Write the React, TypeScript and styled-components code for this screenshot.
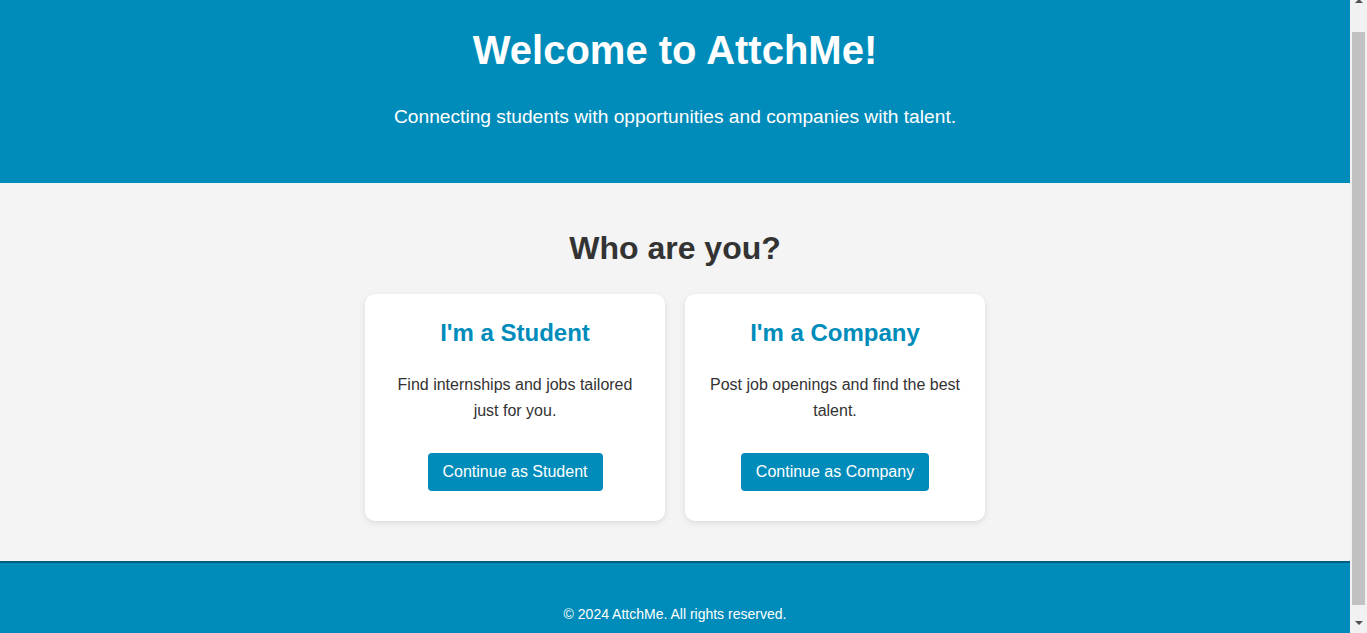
import React from "react";
import styled, { createGlobalStyle } from "styled-components";

const GlobalStyle = createGlobalStyle`
  html, body {
    margin: 0;
    padding: 0;
  }
  body {
    font-family: "Liberation Sans", Arial, sans-serif;
    line-height: 1.6;
    background: #f4f4f4;
    color: #333;
  }
`;

const Page = styled.div`
  margin-right: 17px;
`;

const ScrollTrack = styled.div`
  position: fixed;
  top: 0;
  right: 0;
  bottom: 0;
  width: 17px;
  background: #f1f1f1;
  display: flex;
  flex-direction: column;
  align-items: center;
`;

const Arrow = styled.div<{ $dir: "up" | "down" }>`
  width: 0;
  height: 0;
  border-left: 4px solid transparent;
  border-right: 4px solid transparent;
  ${(p) =>
    p.$dir === "up"
      ? "border-bottom: 4px solid #505050; margin-top: -1px;"
      : "border-top: 4px solid #505050; margin-top: 16px;"}
`;

const Thumb = styled.div`
  width: 13px;
  height: 573px;
  margin-top: 29px;
  background: #c1c1c1;
`;

const Header = styled.header`
  background: #008cba;
  color: #fff;
  text-align: center;
  padding: 18px 20px 50px;
`;

const Title = styled.h1`
  margin: 0;
  font-size: 40px;
  font-weight: bold;
  line-height: 64px;
`;

const Tagline = styled.p`
  margin: 20px 0 0;
  font-size: 19.2px;
`;

const Main = styled.main`
  padding: 40px 20px;
  text-align: center;
`;

const Question = styled.h2`
  margin: 0 0 20px;
  font-size: 32px;
  font-weight: bold;
  color: #333;
`;

const CardRow = styled.div`
  display: flex;
  justify-content: center;
  gap: 20px;
`;

const Card = styled.div`
  width: 300px;
  box-sizing: border-box;
  background: #fff;
  border-radius: 10px;
  padding: 20px 20px 30px;
  box-shadow: 0 2px 6px rgba(0, 0, 0, 0.1);
  display: flex;
  flex-direction: column;
  align-items: center;
`;

const CardTitle = styled.h3`
  margin: 0;
  font-size: 24px;
  font-weight: bold;
  color: #008cba;
`;

const CardText = styled.p`
  margin: 20px 0 30px;
  font-size: 16px;
  color: #333;
`;

const Button = styled.button`
  font-family: "Liberation Sans", Arial, sans-serif;
  font-size: 16px;
  line-height: normal;
  color: #fff;
  background: #008cba;
  border: none;
  border-radius: 4px;
  padding: 10px 15px;
  cursor: pointer;
`;

const Footer = styled.footer`
  background: #008cba;
  border-top: 2px solid #005f80;
  color: #fff;
  text-align: center;
  padding: 40px 20px;
`;

const FooterText = styled.p`
  margin: 0;
  font-size: 14px;
`;

const roles = [
  {
    title: "I'm a Student",
    text: "Find internships and jobs tailored just for you.",
    action: "Continue as Student",
  },
  {
    title: "I'm a Company",
    text: "Post job openings and find the best talent.",
    action: "Continue as Company",
  },
];

export default function App() {
  return (
    <>
      <GlobalStyle />
      <Page>
        <Header>
          <Title>Welcome to AttchMe!</Title>
          <Tagline>Connecting students with opportunities and companies with talent.</Tagline>
        </Header>
        <Main>
          <Question>Who are you?</Question>
          <CardRow>
            {roles.map((r) => (
              <Card key={r.title}>
                <CardTitle>{r.title}</CardTitle>
                <CardText>{r.text}</CardText>
                <Button>{r.action}</Button>
              </Card>
            ))}
          </CardRow>
        </Main>
        <Footer>
          <FooterText>© 2024 AttchMe. All rights reserved.</FooterText>
        </Footer>
      </Page>
      <ScrollTrack aria-hidden="true">
        <Arrow $dir="up" />
        <Thumb />
        <Arrow $dir="down" />
      </ScrollTrack>
    </>
  );
}
